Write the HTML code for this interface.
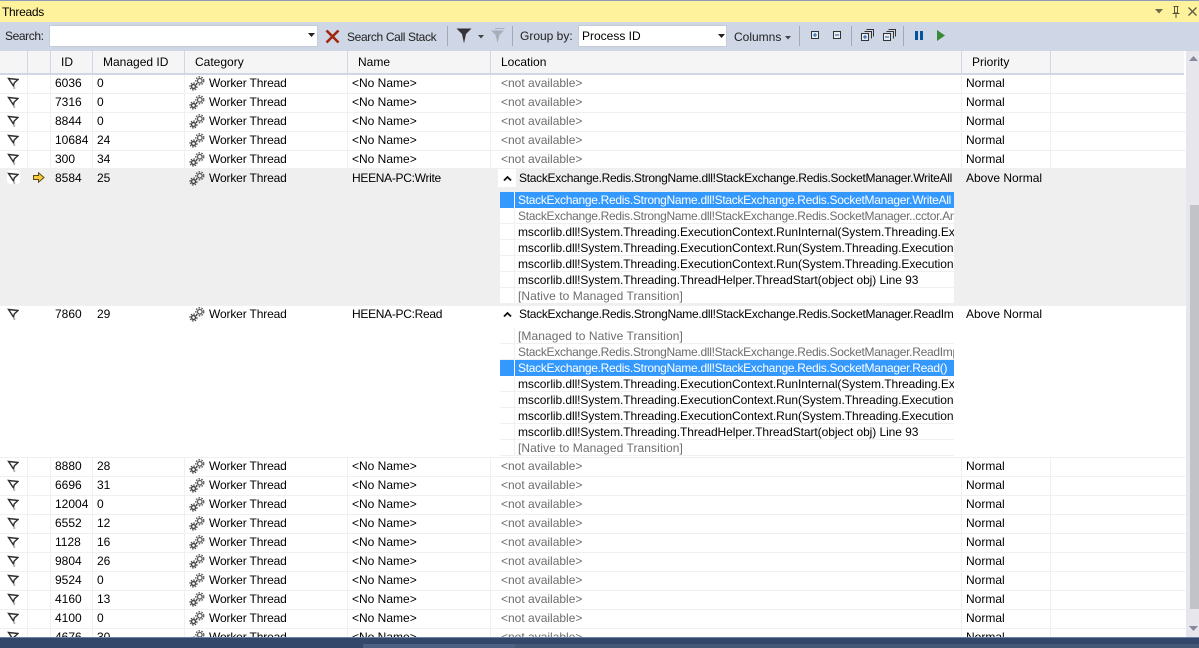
<!DOCTYPE html>
<html><head><meta charset="utf-8"><title>Threads</title>
<style>
html,body{margin:0;padding:0;background:#fff}
#p{position:relative;width:1199px;height:648px;overflow:hidden;background:#fff;font:12px/16px "Liberation Sans",sans-serif;color:#000}
#p div,#p span,#p svg{position:absolute}
.t{white-space:nowrap}
.r{left:0;width:1186px;height:19px;background-color:#fff;background-image:linear-gradient(#f0f0f0,#f0f0f0),linear-gradient(#f0f0f0,#f0f0f0),linear-gradient(#f0f0f0,#f0f0f0),linear-gradient(#f0f0f0,#f0f0f0),linear-gradient(#f0f0f0,#f0f0f0),linear-gradient(#f0f0f0,#f0f0f0),linear-gradient(#f0f0f0,#f0f0f0),linear-gradient(#f0f0f0,#f0f0f0),linear-gradient(#f0f0f0,#f0f0f0);background-repeat:no-repeat;background-size:1186px 1px,1px 100%,1px 100%,1px 100%,1px 100%,1px 100%,1px 100%,1px 100%,1px 100%;background-position:0 100%,27px 0,50px 0,92px 0,184px 0,347px 0,490px 0,961px 0,1050px 0}
.r span{top:0;white-space:nowrap;line-height:16px}
.a{left:55px}.b{left:97px}.c{left:209px;letter-spacing:-.15px}.d{left:352px}.e{left:501px;color:#6d6d6d}.f{left:966px}
.r svg.fl{left:7px;top:2px}.r svg.g{left:189px;top:1px}
.h{top:54px;white-space:nowrap}
.v{background:#cfd6e5;width:1px;top:51px;height:23px}
.s{background:#a3a9b5;width:1px;top:26px;height:20px}
.l{left:500px;width:454px;height:16px;background:#fff;overflow:hidden;background-image:linear-gradient(#f0f0f0,#f0f0f0),linear-gradient(#f0f0f0,#f0f0f0);background-repeat:no-repeat;background-size:100% 1px,1px 100%;background-position:0 100%,14px 0}
.l span{left:18px;top:0;white-space:nowrap;line-height:16px;letter-spacing:-.07px}
.l.sel{background-color:#3399ff;background-image:linear-gradient(#fff,#fff);background-repeat:no-repeat;background-size:1px 100%;background-position:14px 0}
.l span.x{letter-spacing:-.29px}
.l span.n{letter-spacing:.07px}
.sel span{color:#fff}.gr span{color:#6d6d6d}
.m{left:519px;width:434px;overflow:hidden;height:16px;white-space:nowrap;letter-spacing:-.29px}
</style></head><body>
<div id="p">
<svg width="0" height="0" style="left:0;top:0"><defs>
<symbol id="fl" viewBox="0 0 12 14"><path d="M1.500 1.500L11 2.500L7.200 6L6.500 9Z" fill="#fff" stroke="#2e2e2e" stroke-width="1.400" stroke-linejoin="miter"/><path d="M6 9.500h2.200v2.500H6.500z" fill="#b5b5b5"/></symbol>
<symbol id="g" viewBox="0 0 18 16"><circle cx="4.500" cy="10.500" r="2" fill="none" stroke="#444" stroke-width="1.400"/><circle cx="4.500" cy="10.500" r="3.500" fill="none" stroke="#444" stroke-width="1.200" stroke-dasharray="1.500 1.200"/><circle cx="10.800" cy="4.800" r="2.300" fill="none" stroke="#555" stroke-width="1.300"/><circle cx="10.800" cy="4.800" r="4" fill="none" stroke="#555" stroke-width="1.300" stroke-dasharray="1.600 1.300"/></symbol>
</defs></svg>

<div style="left:0;top:0;width:1199px;height:1px;background:#8e9bbc"></div>
<div style="left:0;top:1px;width:1199px;height:21px;background:#fff29d"></div>
<div class="t" style="left:2px;top:4px;letter-spacing:-.3px">Threads</div>
<svg style="left:1154px;top:7px" width="10" height="8"><path d="M1 2h8L5 6.500z" fill="#6e6a45"/></svg>
<svg style="left:1170px;top:5px" width="12" height="14"><path d="M3.500 1.500h5M4.500 1.500v6.500h3V1.500M2.500 8.500h7M6 9v4" fill="none" stroke="#55533a" stroke-width="1"/></svg>
<svg style="left:1187px;top:6px" width="11" height="11"><path d="M1.500 1.500l8 8M9.500 1.500l-8 8" stroke="#5e5c42" stroke-width="1.400"/></svg>

<div style="left:0;top:22px;width:1199px;height:29px;background:#cfd6e5"></div>
<div class="t" style="left:5px;top:28px;color:#222;letter-spacing:-.4px">Search:</div>
<div style="left:49px;top:25px;width:269px;height:22px;background:#fff;border:1px solid #c5cbd8;box-sizing:border-box"></div>
<svg style="left:308px;top:33px" width="8" height="5"><path d="M0 0h7L3.500 4z" fill="#222"/></svg>
<svg style="left:325px;top:29px" width="15" height="15"><path d="M1.500 1.500l12 12M13.500 1.500l-12 12" stroke="#a1260d" stroke-width="2.600"/></svg>
<div class="t" style="left:347px;top:29px;color:#222;letter-spacing:-.36px">Search Call Stack</div>
<div class="s" style="left:447px"></div>
<svg style="left:456px;top:28px" width="16" height="17"><path d="M0.500 0.500H15.500L10 6L8 15.500L6 6Z" fill="#333"/></svg>
<svg style="left:478px;top:35px" width="7" height="4"><path d="M0 0h6L3 3.500z" fill="#444"/></svg>
<svg style="left:490px;top:28px" width="15" height="16"><path d="M1 2.500H14L9.500 7L7.500 15L5.500 7Z" fill="#a9afba"/><path d="M5 .500H14.500" stroke="#a9afba"/></svg>
<div class="s" style="left:512px"></div>
<div class="t" style="left:520px;top:28px;color:#222">Group by:</div>
<div style="left:578px;top:25px;width:149px;height:22px;background:#fff;border:1px solid #c5cbd8;box-sizing:border-box"></div>
<div class="t" style="left:582px;top:28px">Process ID</div>
<svg style="left:718px;top:34px" width="8" height="5"><path d="M0 0h7L3.500 4z" fill="#222"/></svg>
<div class="t" style="left:734px;top:29px;color:#222">Columns</div>
<svg style="left:785px;top:36px" width="6" height="4"><path d="M0 0h6L3 3.500z" fill="#444"/></svg>
<div class="s" style="left:799px"></div>
<svg style="left:811px;top:31px" width="9" height="9"><rect x=".5" y=".5" width="7" height="7" fill="#e8ebf2" stroke="#333"/><path d="M2 4h4M4 2v4" stroke="#1c5aa0"/></svg>
<svg style="left:833px;top:31px" width="9" height="9"><rect x=".5" y=".5" width="7" height="7" fill="#e8ebf2" stroke="#333"/><path d="M2 4h4" stroke="#1c5aa0"/></svg>
<div class="s" style="left:851px"></div>
<svg style="left:861px;top:29px" width="13" height="13"><path d="M5.500 .5h7v7M3.500 2.500h7v7" fill="none" stroke="#333"/><rect x=".5" y="4.500" width="7" height="7" fill="#e8ebf2" stroke="#333"/><path d="M2 8h4M4 6v4" stroke="#1c5aa0"/></svg>
<svg style="left:883px;top:29px" width="13" height="13"><path d="M5.500 .5h7v7M3.500 2.500h7v7" fill="none" stroke="#333"/><rect x=".5" y="4.500" width="7" height="7" fill="#e8ebf2" stroke="#333"/><path d="M2 8h4" stroke="#1c5aa0"/></svg>
<div class="s" style="left:903px"></div>
<div style="left:915px;top:31px;width:3px;height:9px;background:#00539c"></div>
<div style="left:920px;top:31px;width:3px;height:9px;background:#00539c"></div>
<svg style="left:936px;top:29px" width="10" height="13"><path d="M1 1l8 5.500L1 12z" fill="#388a34"/></svg>

<div style="left:0;top:51px;width:1184px;height:22px;background:#f5f5f5"></div>
<div style="left:0;top:73px;width:1184px;height:2px;background:#cfd6e5"></div>
<div class="v" style="left:27px"></div><div class="v" style="left:50px"></div><div class="v" style="left:92px"></div><div class="v" style="left:184px"></div><div class="v" style="left:347px"></div><div class="v" style="left:490px"></div><div class="v" style="left:961px"></div><div class="v" style="left:1050px"></div>
<div class="h" style="left:61px">ID</div><div class="h" style="left:103px">Managed ID</div><div class="h" style="left:195px">Category</div><div class="h" style="left:358px">Name</div><div class="h" style="left:501px">Location</div><div class="h" style="left:972px">Priority</div>

<div class="r" style="top:75px"><svg class="fl" width="12" height="14"><use href="#fl"/></svg><span class="a">6036</span><span class="b">0</span><svg class="g" width="18" height="16"><use href="#g"/></svg><span class="c">Worker Thread</span><span class="d">&lt;No Name&gt;</span><span class="e">&lt;not available&gt;</span><span class="f">Normal</span></div>
<div class="r" style="top:94px"><svg class="fl" width="12" height="14"><use href="#fl"/></svg><span class="a">7316</span><span class="b">0</span><svg class="g" width="18" height="16"><use href="#g"/></svg><span class="c">Worker Thread</span><span class="d">&lt;No Name&gt;</span><span class="e">&lt;not available&gt;</span><span class="f">Normal</span></div>
<div class="r" style="top:113px"><svg class="fl" width="12" height="14"><use href="#fl"/></svg><span class="a">8844</span><span class="b">0</span><svg class="g" width="18" height="16"><use href="#g"/></svg><span class="c">Worker Thread</span><span class="d">&lt;No Name&gt;</span><span class="e">&lt;not available&gt;</span><span class="f">Normal</span></div>
<div class="r" style="top:132px"><svg class="fl" width="12" height="14"><use href="#fl"/></svg><span class="a">10684</span><span class="b">24</span><svg class="g" width="18" height="16"><use href="#g"/></svg><span class="c">Worker Thread</span><span class="d">&lt;No Name&gt;</span><span class="e">&lt;not available&gt;</span><span class="f">Normal</span></div>
<div class="r" style="top:151px;height:18px"><svg class="fl" width="12" height="14"><use href="#fl"/></svg><span class="a">300</span><span class="b">34</span><svg class="g" width="18" height="16"><use href="#g"/></svg><span class="c">Worker Thread</span><span class="d">&lt;No Name&gt;</span><span class="e">&lt;not available&gt;</span><span class="f">Normal</span></div>

<div style="left:0;top:169px;width:1186px;height:136px;background:#efefef"></div>
<div style="left:7px;top:170px;width:13px;height:14px;background:#fff;border-radius:3px"></div>
<svg style="left:7px;top:172px" width="12" height="14"><use href="#fl"/></svg>
<svg style="left:33px;top:172px" width="12" height="11"><path d="M.5 3.500H5.500V.8L11 5.500 5.500 10.200V7.500H.5Z" fill="#f5c93a" stroke="#5c4a10"/></svg>
<div class="t" style="left:55px;top:170px">8584</div><div class="t" style="left:97px;top:170px">25</div>
<svg style="left:189px;top:171px" width="18" height="16"><use href="#g"/></svg>
<div class="t" style="left:209px;top:170px;letter-spacing:-.15px">Worker Thread</div>
<div class="t" style="left:352px;top:170px;letter-spacing:-.3px">HEENA-PC:Write</div>
<div style="left:498px;top:169px;width:18px;height:18px;background:#fff"></div>
<svg style="left:503px;top:175px" width="10" height="7"><path d="M1 5.500L4.500 2 8 5.500" fill="none" stroke="#111" stroke-width="1.800"/></svg>
<div class="m" style="top:170px">StackExchange.Redis.StrongName.dll!StackExchange.Redis.SocketManager.WriteAll</div>
<div class="t" style="left:966px;top:170px">Above Normal</div>
<div style="left:500px;top:192px;width:454px;height:112px;background:#fff"></div>
<div class="l sel" style="top:192px"><span class="x">StackExchange.Redis.StrongName.dll!StackExchange.Redis.SocketManager.WriteAll</span></div>
<div class="l gr" style="top:208px"><span class="x">StackExchange.Redis.StrongName.dll!StackExchange.Redis.SocketManager..cctor.AnonymousMethod</span></div>
<div class="l" style="top:224px"><span>mscorlib.dll!System.Threading.ExecutionContext.RunInternal(System.Threading.ExecutionContext</span></div>
<div class="l" style="top:240px"><span>mscorlib.dll!System.Threading.ExecutionContext.Run(System.Threading.ExecutionContext</span></div>
<div class="l" style="top:256px"><span>mscorlib.dll!System.Threading.ExecutionContext.Run(System.Threading.ExecutionContext</span></div>
<div class="l" style="top:272px"><span>mscorlib.dll!System.Threading.ThreadHelper.ThreadStart(object obj) Line 93</span></div>
<div class="l gr" style="top:288px"><span class="n">[Native to Managed Transition]</span></div>

<div style="left:0;top:305px;width:1186px;height:153px;background:#fff;border-top:1px solid #f0f0f0;border-bottom:1px solid #f0f0f0;box-sizing:border-box"></div>
<svg style="left:7px;top:308px" width="12" height="14"><use href="#fl"/></svg>
<div class="t" style="left:55px;top:306px">7860</div><div class="t" style="left:97px;top:306px">29</div>
<svg style="left:189px;top:307px" width="18" height="16"><use href="#g"/></svg>
<div class="t" style="left:209px;top:306px;letter-spacing:-.15px">Worker Thread</div>
<div class="t" style="left:352px;top:306px;letter-spacing:-.3px">HEENA-PC:Read</div>
<svg style="left:503px;top:311px" width="10" height="7"><path d="M1 5.500L4.500 2 8 5.500" fill="none" stroke="#111" stroke-width="1.800"/></svg>
<div class="m" style="top:306px">StackExchange.Redis.StrongName.dll!StackExchange.Redis.SocketManager.ReadImpl</div>
<div class="t" style="left:966px;top:306px">Above Normal</div>
<div class="l gr" style="top:328px"><span class="n">[Managed to Native Transition]</span></div>
<div class="l gr" style="top:344px"><span class="x">StackExchange.Redis.StrongName.dll!StackExchange.Redis.SocketManager.ReadImpl</span></div>
<div class="l sel" style="top:360px"><span class="x">StackExchange.Redis.StrongName.dll!StackExchange.Redis.SocketManager.Read()</span></div>
<div class="l" style="top:376px"><span>mscorlib.dll!System.Threading.ExecutionContext.RunInternal(System.Threading.ExecutionContext</span></div>
<div class="l" style="top:392px"><span>mscorlib.dll!System.Threading.ExecutionContext.Run(System.Threading.ExecutionContext</span></div>
<div class="l" style="top:408px"><span>mscorlib.dll!System.Threading.ExecutionContext.Run(System.Threading.ExecutionContext</span></div>
<div class="l" style="top:424px"><span>mscorlib.dll!System.Threading.ThreadHelper.ThreadStart(object obj) Line 93</span></div>
<div class="l gr" style="top:440px"><span class="n">[Native to Managed Transition]</span></div>

<div class="r" style="top:458px"><svg class="fl" width="12" height="14"><use href="#fl"/></svg><span class="a">8880</span><span class="b">28</span><svg class="g" width="18" height="16"><use href="#g"/></svg><span class="c">Worker Thread</span><span class="d">&lt;No Name&gt;</span><span class="e">&lt;not available&gt;</span><span class="f">Normal</span></div>
<div class="r" style="top:477px"><svg class="fl" width="12" height="14"><use href="#fl"/></svg><span class="a">6696</span><span class="b">31</span><svg class="g" width="18" height="16"><use href="#g"/></svg><span class="c">Worker Thread</span><span class="d">&lt;No Name&gt;</span><span class="e">&lt;not available&gt;</span><span class="f">Normal</span></div>
<div class="r" style="top:496px"><svg class="fl" width="12" height="14"><use href="#fl"/></svg><span class="a">12004</span><span class="b">0</span><svg class="g" width="18" height="16"><use href="#g"/></svg><span class="c">Worker Thread</span><span class="d">&lt;No Name&gt;</span><span class="e">&lt;not available&gt;</span><span class="f">Normal</span></div>
<div class="r" style="top:515px"><svg class="fl" width="12" height="14"><use href="#fl"/></svg><span class="a">6552</span><span class="b">12</span><svg class="g" width="18" height="16"><use href="#g"/></svg><span class="c">Worker Thread</span><span class="d">&lt;No Name&gt;</span><span class="e">&lt;not available&gt;</span><span class="f">Normal</span></div>
<div class="r" style="top:534px"><svg class="fl" width="12" height="14"><use href="#fl"/></svg><span class="a">1128</span><span class="b">16</span><svg class="g" width="18" height="16"><use href="#g"/></svg><span class="c">Worker Thread</span><span class="d">&lt;No Name&gt;</span><span class="e">&lt;not available&gt;</span><span class="f">Normal</span></div>
<div class="r" style="top:553px"><svg class="fl" width="12" height="14"><use href="#fl"/></svg><span class="a">9804</span><span class="b">26</span><svg class="g" width="18" height="16"><use href="#g"/></svg><span class="c">Worker Thread</span><span class="d">&lt;No Name&gt;</span><span class="e">&lt;not available&gt;</span><span class="f">Normal</span></div>
<div class="r" style="top:572px"><svg class="fl" width="12" height="14"><use href="#fl"/></svg><span class="a">9524</span><span class="b">0</span><svg class="g" width="18" height="16"><use href="#g"/></svg><span class="c">Worker Thread</span><span class="d">&lt;No Name&gt;</span><span class="e">&lt;not available&gt;</span><span class="f">Normal</span></div>
<div class="r" style="top:591px"><svg class="fl" width="12" height="14"><use href="#fl"/></svg><span class="a">4160</span><span class="b">13</span><svg class="g" width="18" height="16"><use href="#g"/></svg><span class="c">Worker Thread</span><span class="d">&lt;No Name&gt;</span><span class="e">&lt;not available&gt;</span><span class="f">Normal</span></div>
<div class="r" style="top:610px"><svg class="fl" width="12" height="14"><use href="#fl"/></svg><span class="a">4100</span><span class="b">0</span><svg class="g" width="18" height="16"><use href="#g"/></svg><span class="c">Worker Thread</span><span class="d">&lt;No Name&gt;</span><span class="e">&lt;not available&gt;</span><span class="f">Normal</span></div>
<div class="r" style="top:629px"><svg class="fl" width="12" height="14"><use href="#fl"/></svg><span class="a">4676</span><span class="b">30</span><svg class="g" width="18" height="16"><use href="#g"/></svg><span class="c">Worker Thread</span><span class="d">&lt;No Name&gt;</span><span class="e">&lt;not available&gt;</span><span class="f">Normal</span></div>

<div style="left:1186px;top:51px;width:13px;height:586px;background:#e6e6ec"></div>
<svg style="left:1189px;top:56px" width="10" height="6"><path d="M0 5h9L4.500 0z" fill="#868999"/></svg>
<div style="left:1190px;top:205px;width:9px;height:404px;background:#c2c3c9"></div>
<svg style="left:1189px;top:626px" width="10" height="6"><path d="M0 0h9L4.500 5z" fill="#868999"/></svg>

<div style="left:0;top:637px;width:1199px;height:1px;background:#6d80a5"></div>
<div style="left:0;top:638px;width:1199px;height:10px;background:#33476b"></div>
<div style="left:363px;top:644px;width:152px;height:4px;background:#4d5f82"></div>
<div style="left:515px;top:644px;width:684px;height:4px;background:#465877"></div>
</div>
</body></html>
